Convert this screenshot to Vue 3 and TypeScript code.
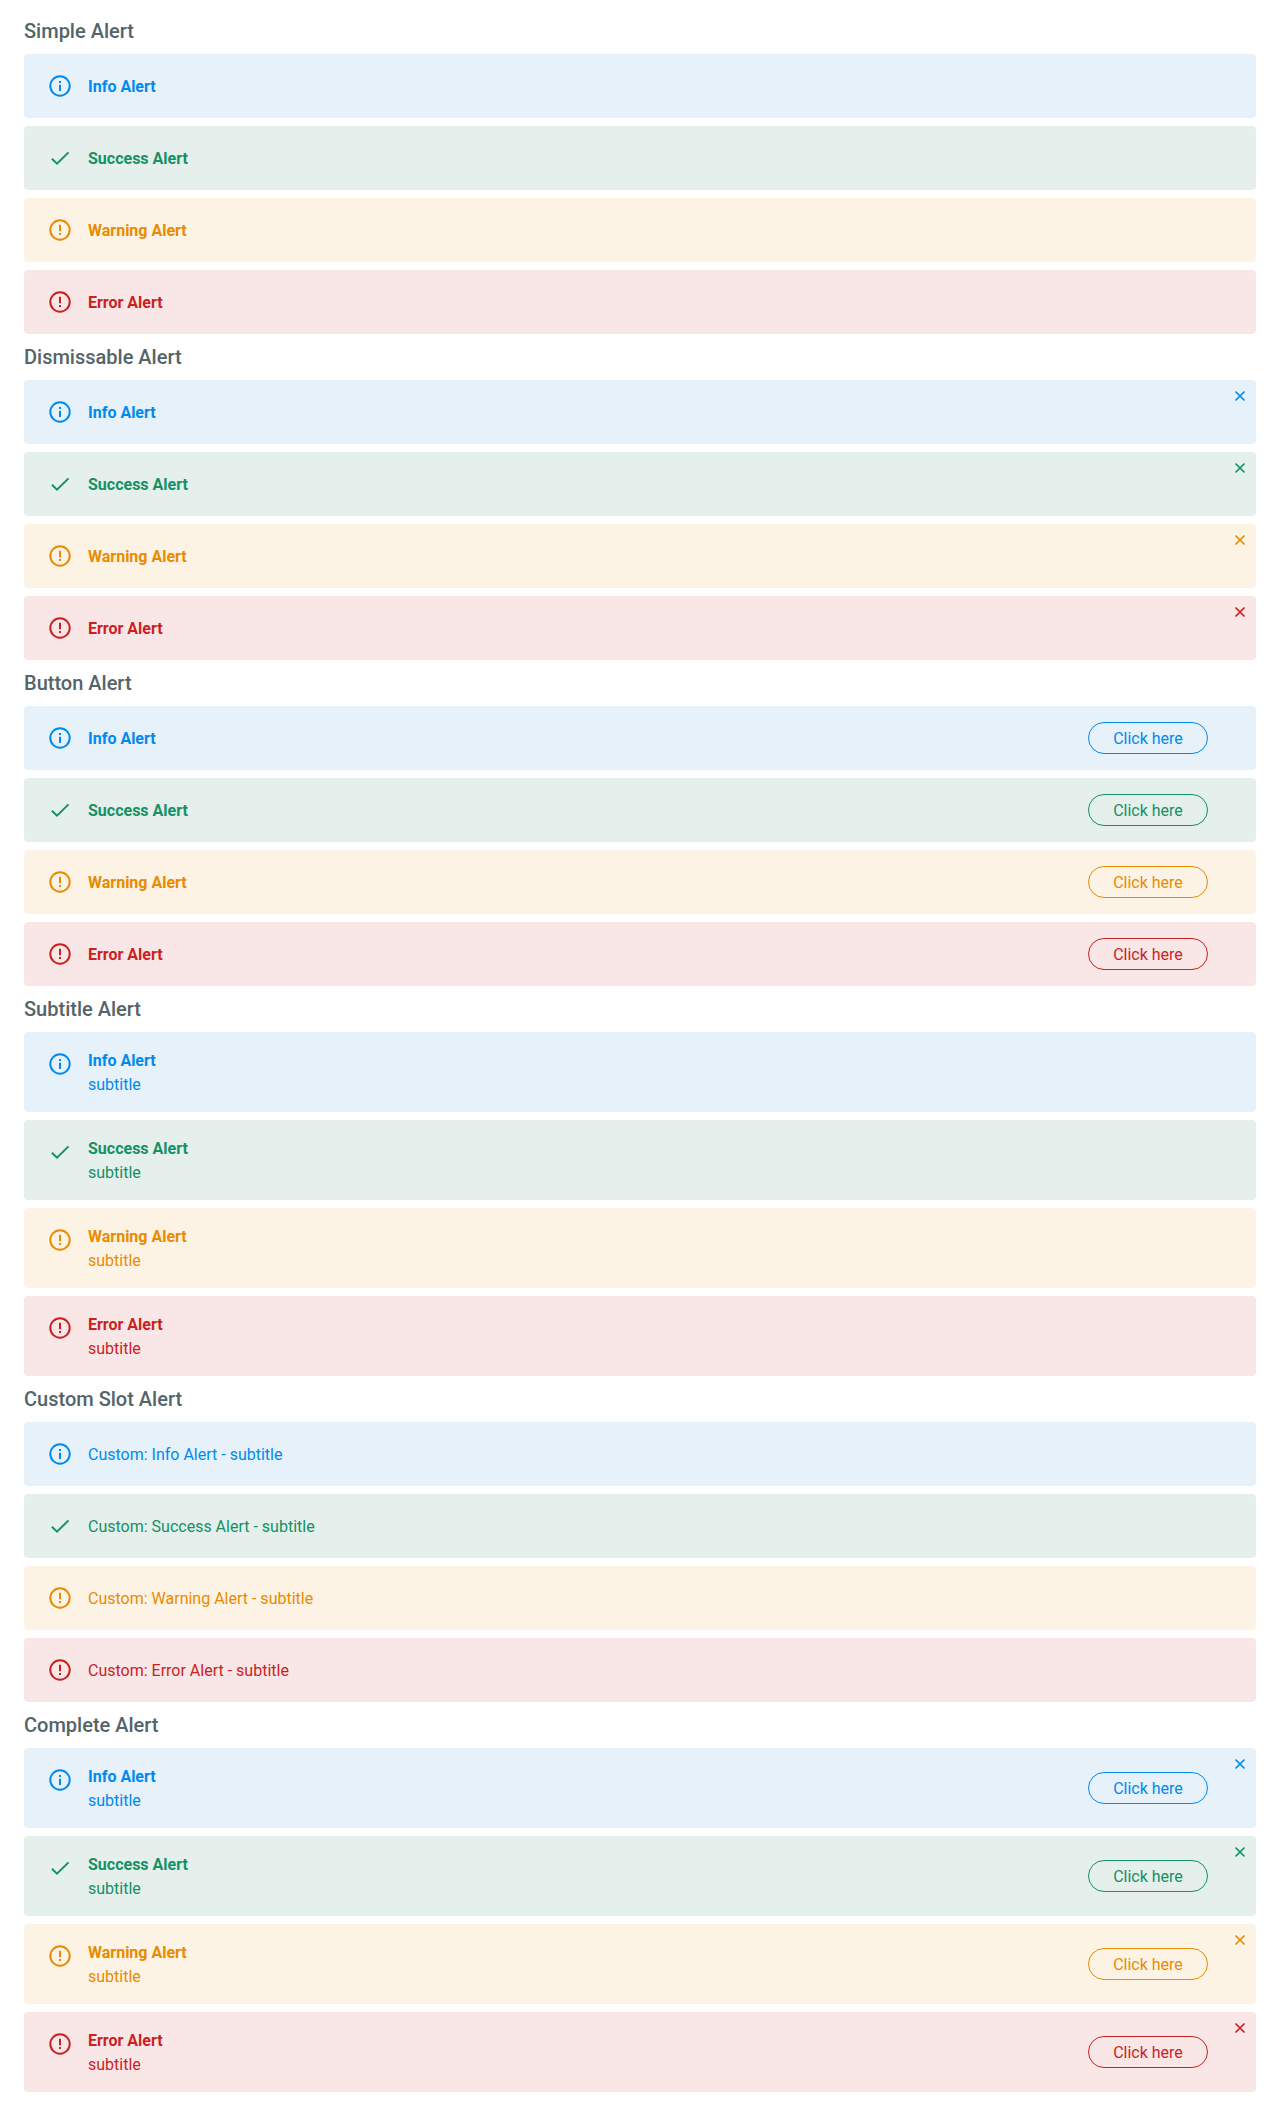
<script setup lang="ts">
type Kind = 'info' | 'success' | 'warning' | 'error'

interface Section {
  title: string
  dismissable?: boolean
  button?: boolean
  subtitle?: boolean
  custom?: boolean
}

const kinds: { kind: Kind; label: string }[] = [
  { kind: 'info', label: 'Info Alert' },
  { kind: 'success', label: 'Success Alert' },
  { kind: 'warning', label: 'Warning Alert' },
  { kind: 'error', label: 'Error Alert' },
]

const sections: Section[] = [
  { title: 'Simple Alert' },
  { title: 'Dismissable Alert', dismissable: true },
  { title: 'Button Alert', button: true },
  { title: 'Subtitle Alert', subtitle: true },
  { title: 'Custom Slot Alert', custom: true },
  { title: 'Complete Alert', dismissable: true, button: true, subtitle: true },
]
</script>

<template>
  <main class="page">
    <section v-for="s in sections" :key="s.title">
      <h2 class="heading">{{ s.title }}</h2>
      <div class="list">
        <div v-for="k in kinds" :key="k.kind" class="alert" :class="[k.kind, { tall: s.subtitle }]">
          <svg class="icon" viewBox="0 0 24 24" fill="none" stroke="currentColor" stroke-width="2">
            <path v-if="k.kind === 'success'" d="M3.9 12.7 9 17.6 20.5 6.4" />
            <template v-else>
              <circle cx="12" cy="12" r="9.7" />
              <path v-if="k.kind === 'info'" d="M12 7v1.9M12 10.8v6.2" />
              <path v-else d="M12 6.8v6.4M12 15.1v1.9" />
            </template>
          </svg>
          <div class="content">
            <template v-if="s.custom">Custom: {{ k.label }} - subtitle</template>
            <template v-else>
              <div class="title">{{ k.label }}</div>
              <div v-if="s.subtitle">subtitle</div>
            </template>
          </div>
          <button v-if="s.button" class="action" type="button">Click here</button>
          <button v-if="s.dismissable" class="close" type="button" aria-label="Close">
            <svg viewBox="0 0 16 16" width="16" height="16" fill="none" stroke="currentColor" stroke-width="1.7">
              <path d="M3.5 3.5l9 9M12.5 3.5l-9 9" />
            </svg>
          </button>
        </div>
      </div>
    </section>
  </main>
</template>

<style>
body {
  background: #fff;
}
</style>

<style scoped>
.page {
  padding: 8px 24px 16px;
  font-family: Roboto, sans-serif;
  font-size: 16px;
  line-height: 24px;
}
.heading {
  margin: 0;
  font-size: 20px;
  font-weight: 500;
  line-height: 46px;
  color: #546469;
}
.list {
  display: flex;
  flex-direction: column;
  gap: 8px;
}
.alert {
  position: relative;
  box-sizing: border-box;
  display: flex;
  align-items: center;
  height: 64px;
  padding: 0 48px 0 24px;
  border-radius: 4px;
}
.tall {
  height: 80px;
}
.icon {
  flex: none;
  width: 24px;
  height: 24px;
  margin-right: 16px;
}
.tall .icon {
  align-self: flex-start;
  margin-top: 20px;
}
.content {
  flex: 1;
  padding-top: 2px;
}
.title {
  font-weight: 700;
}
.info {
  color: #008aed;
  background: #e6f1fa;
}
.success {
  color: #149166;
  background: #e5efeb;
}
.warning {
  color: #e88b00;
  background: #fdf3e4;
}
.error {
  color: #cc1f1f;
  background: #f9e6e6;
}
button {
  font: inherit;
  color: inherit;
  background: none;
}
.action {
  box-sizing: border-box;
  width: 120px;
  height: 32px;
  padding: 2px 0 0;
  border: 1px solid currentColor;
  border-radius: 16px;
}
.close {
  position: absolute;
  top: 8px;
  right: 8px;
  display: flex;
  padding: 0;
  border: 0;
}
</style>
